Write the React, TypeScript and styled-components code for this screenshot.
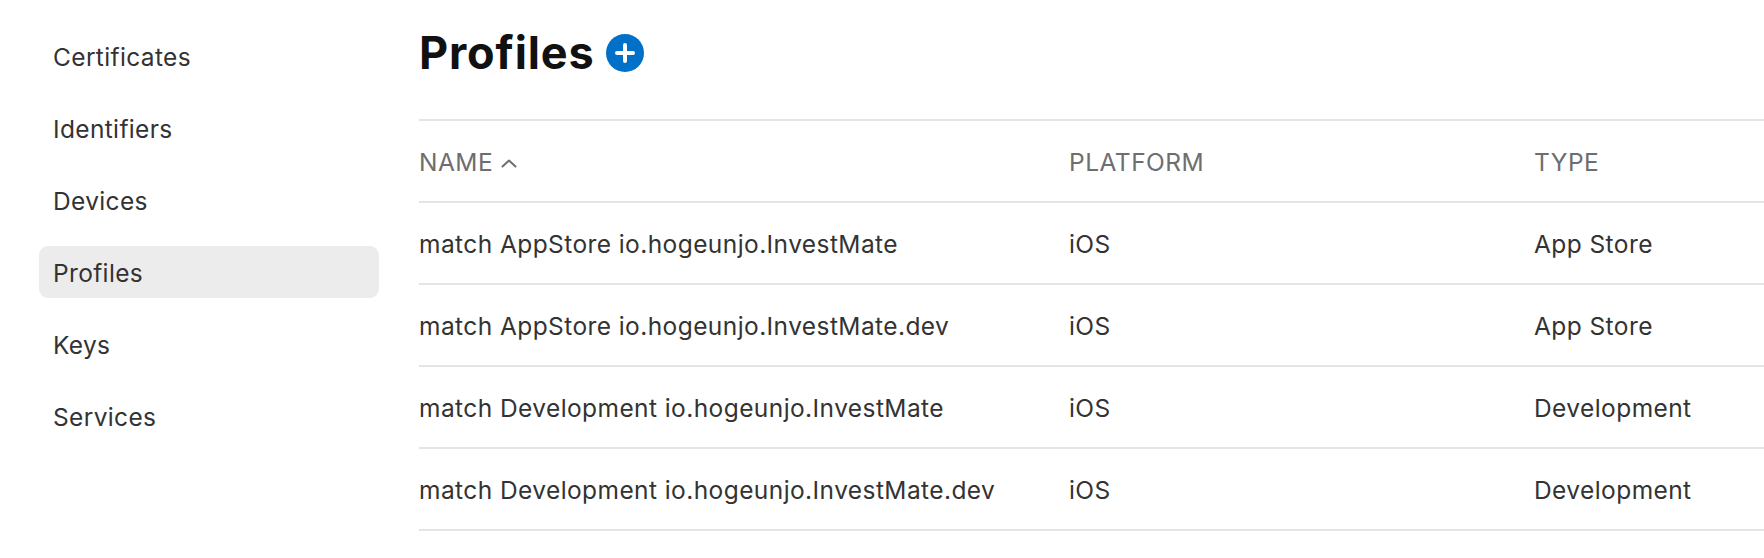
import React from 'react';
import styled, { createGlobalStyle } from 'styled-components';

const navItems = ['Certificates', 'Identifiers', 'Devices', 'Profiles', 'Keys', 'Services'];

const profiles = [
  { name: 'match AppStore io.hogeunjo.InvestMate', platform: 'iOS', type: 'App Store' },
  { name: 'match AppStore io.hogeunjo.InvestMate.dev', platform: 'iOS', type: 'App Store' },
  { name: 'match Development io.hogeunjo.InvestMate', platform: 'iOS', type: 'Development' },
  { name: 'match Development io.hogeunjo.InvestMate.dev', platform: 'iOS', type: 'Development' },
];

const App: React.FC = () => {
  return (
    <>
      <GlobalStyle />
      <Page>
        <Sidebar>
          {navItems.map((item) => (
            <NavItem key={item} $active={item === 'Profiles'}>
              {item}
            </NavItem>
          ))}
        </Sidebar>
        <Main>
          <Header>
            <Title>Profiles</Title>
            <AddButton aria-label="Add profile">
              <svg width="38" height="38" viewBox="0 0 38 38">
                <circle cx="19" cy="19" r="19" fill="#0070c9" />
                <path d="M19 11v16M11 19h16" stroke="#fff" strokeWidth="4" strokeLinecap="round" />
              </svg>
            </AddButton>
          </Header>
          <Table>
            <HeaderRow>
              <HeaderCell>
                NAME
                <SortIcon width="16" height="9" viewBox="0 0 16 9" fill="none">
                  <path d="M1.5 7.5L8 1.5l6.5 6" stroke="#6e6e6e" strokeWidth="2" strokeLinecap="round" strokeLinejoin="round" />
                </SortIcon>
              </HeaderCell>
              <HeaderCell>PLATFORM</HeaderCell>
              <HeaderCell>TYPE</HeaderCell>
            </HeaderRow>
            {profiles.map((profile) => (
              <Row key={profile.name}>
                <Cell>{profile.name}</Cell>
                <Cell>{profile.platform}</Cell>
                <Cell>{profile.type}</Cell>
              </Row>
            ))}
          </Table>
        </Main>
      </Page>
    </>
  );
};

export default App;

const GlobalStyle = createGlobalStyle`
  html, body {
    margin: 0;
    background: #fff;
    overflow: hidden;
  }
`;

const Page = styled.div`
  display: flex;
  height: 558px;
  font-family: Inter, "Liberation Sans", sans-serif;
  color: #333;
`;

const Sidebar = styled.nav`
  display: flex;
  flex-direction: column;
  gap: 20px;
  width: 340px;
  flex-shrink: 0;
  margin: 30px 40px 0 39px;
`;

const NavItem = styled.a<{ $active?: boolean }>`
  display: flex;
  align-items: center;
  box-sizing: border-box;
  height: 52px;
  padding: 1px 0 0 14px;
  border-radius: 9px;
  font-size: 24.5px;
  letter-spacing: 0.35px;
  background-color: ${({ $active }) => ($active ? '#ececec' : 'transparent')};
`;

const Main = styled.main`
  flex: 1;
  min-width: 0;
`;

const Header = styled.header`
  display: flex;
  align-items: center;
  gap: 12px;
  height: 119px;
  padding-bottom: 14px;
  box-sizing: border-box;
`;

const Title = styled.h1`
  margin: 0;
  font-size: 45px;
  font-weight: 700;
  letter-spacing: 0.85px;
  line-height: 1;
  color: #111;
`;

const AddButton = styled.button`
  display: flex;
  width: 38px;
  height: 38px;
  padding: 0;
  border: none;
  background: none;
`;

const Table = styled.div`
  border-top: 2px solid #e5e5e5;
`;

const Row = styled.div`
  display: grid;
  grid-template-columns: 650px 465px 1fr;
  align-items: center;
  height: 80px;
  border-bottom: 2px solid #e5e5e5;
`;

const HeaderRow = styled(Row)`
  color: #6e6e6e;
`;

const HeaderCell = styled.div`
  display: flex;
  align-items: center;
  gap: 8px;
  padding-top: 1px;
  font-size: 24.5px;
  letter-spacing: 0.5px;
`;

const SortIcon = styled.svg`
  margin-top: 4px;
`;

const Cell = styled.div`
  padding-top: 1px;
  font-size: 24.5px;
  letter-spacing: 0.42px;
`;
